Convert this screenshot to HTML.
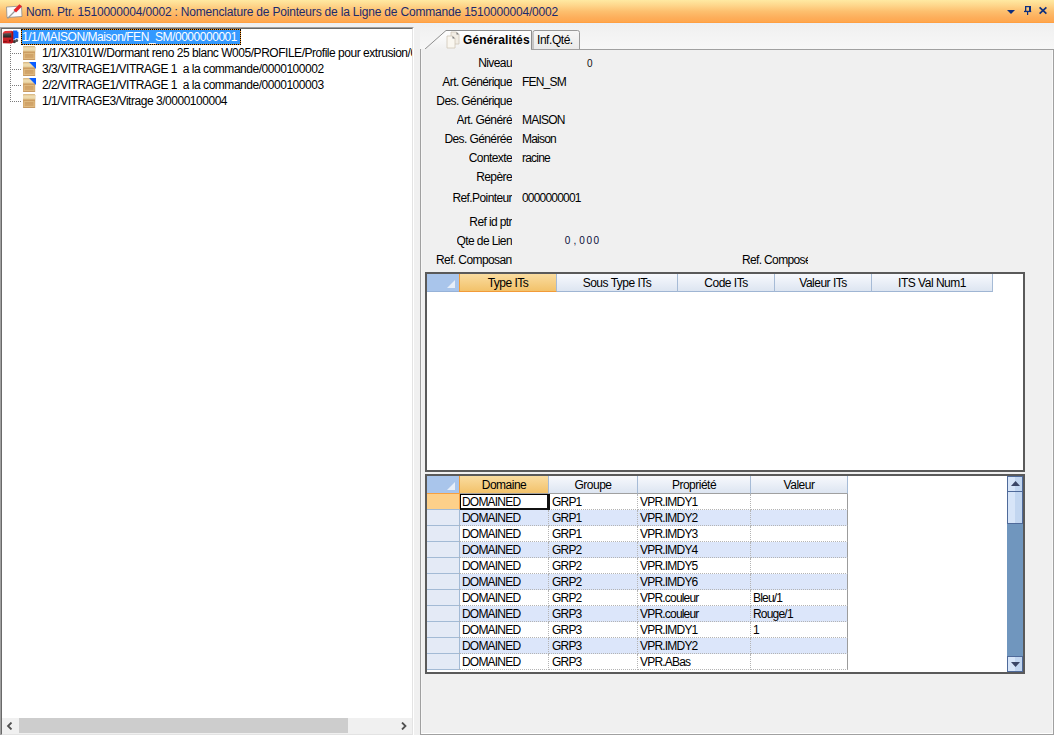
<!DOCTYPE html>
<html><head><meta charset="utf-8">
<style>
*{margin:0;padding:0;box-sizing:border-box}
html,body{width:1054px;height:735px;overflow:hidden;background:#F0F0F0;font-family:"Liberation Sans",sans-serif;font-size:11px;color:#000}
.a{position:absolute}
.t{position:absolute;white-space:nowrap;line-height:13px}
#title{left:0;top:0;width:1054px;height:23px;background:linear-gradient(#FFE9A2 0%,#FED58A 25%,#FDBF6E 50%,#FDAF5C 75%,#FFA74E 95%,#FF9C3A 100%)}
#ttxt{left:26px;top:5px;font-size:12px;color:#1C2A6C;line-height:15px;letter-spacing:-0.19px}
#tree{left:0;top:27px;width:414px;height:709px;border-left:1px solid #A0A0A0;border-top:1px solid #A0A0A0;border-right:1px solid #FFF;border-bottom:1px solid #FFF}
#treei{position:absolute;left:0;top:0;right:0;bottom:0;border-left:1px solid #696969;border-top:1px solid #696969;border-right:1px solid #E3E3E3;border-bottom:1px solid #E3E3E3;background:#fff;overflow:hidden}
.row{position:absolute;height:16px;white-space:nowrap;line-height:16px;font-size:12px;letter-spacing:-0.47px}
#page{left:420px;top:49px;width:634px;height:686px;border-left:1px solid #A0A0A0;border-top:1px solid #A0A0A0;border-right:1px solid #A0A0A0;border-bottom:1px solid #A0A0A0}
#pagei{position:absolute;left:0;top:0;right:0;bottom:0;border-right:1px solid #F8F8F8;border-bottom:1px solid #FFF;border-left:1px solid #F6F6F6}
.lbl{position:absolute;right:542px;white-space:nowrap;line-height:13px;font-size:12px;letter-spacing:-0.6px;text-align:right;overflow:hidden}
.mc{display:inline-block;width:7.2px;text-align:center}
.val{position:absolute;left:522px;white-space:nowrap;line-height:13px;font-size:12px;letter-spacing:-0.8px}
.grid{position:absolute;background:#fff;border:2px solid #5A5A5A}
.hdr{position:absolute;top:0;height:18px;line-height:19px;text-align:center;font-size:12px;letter-spacing:-0.5px;background:linear-gradient(#F7F9FD,#DDE5F1);border-right:1px solid #A6BBD6;border-bottom:1px solid #9FB5D3}
.hdr.sel{background:linear-gradient(#FADCA0,#F2C26A);border-left:1px solid #F29B38;border-bottom:1px solid #F29B38}
.ind{position:absolute;left:0;top:0;width:32px;height:18px;background:#A9C5EB;border-bottom:1px solid #96B2D8}
.gr{position:absolute;left:0;height:16px;width:420px}
.indr{position:absolute;left:0;top:0;width:33px;height:16px;background:#E4EAF6;border-bottom:1px solid #A3BAD5;border-right:1px solid #A3BAD5}
.indr.cur{background:#FDD08A;border-top:1px solid #F7A040;top:-1px;height:17px;border-right:1px solid #F7A040;width:33px}
.gr.alt{background:#DCE6FA}
.gr{background:#fff}
.cell{position:absolute;top:0;height:16px;line-height:16px;font-size:12px;letter-spacing:-0.8px;padding-left:3px;white-space:nowrap;overflow:hidden;border-right:1px dotted #B4B4B4;border-bottom:1px dotted #B4B4B4}
</style></head><body>

<div id="title" class="a">
  <svg class="a" style="left:5px;top:3px" width="18" height="17" viewBox="0 0 18 17">
    <polygon points="1.5,4 16.5,3 17,13.5 2,14.5" fill="#FCFCFC" stroke="#8C8C8C" stroke-width="0.8"/>
    <line x1="2.5" y1="15.5" x2="10" y2="8" stroke="#9A9A9A" stroke-width="1.2"/>
    <polygon points="8.5,7 14.5,1.2 17,3.5 11,9.5" fill="#E3262A"/>
  </svg>
  <div id="ttxt" class="t">Nom. Ptr. 1510000004/0002 : Nomenclature de Pointeurs de la Ligne de Commande 1510000004/0002</div>
  <svg class="a" style="left:1000px;top:0" width="54" height="23" viewBox="0 0 54 23">
    <polygon points="7,10 15,10 11,14" fill="#0E2F7E"/>
    <rect x="25" y="6" width="6" height="1.2" fill="#0E2F7E"/>
    <rect x="25" y="6" width="1.3" height="5" fill="#0E2F7E"/>
    <rect x="29" y="6" width="2" height="5" fill="#0E2F7E"/>
    <rect x="24" y="10.8" width="7.2" height="1.3" fill="#0E2F7E"/>
    <rect x="27" y="12" width="1.2" height="3" fill="#0E2F7E"/>
    <path d="M39.6,7.4 L46.4,13.6 M46.4,7.4 L39.6,13.6" stroke="#0E2F7E" stroke-width="1.7"/>
  </svg>
</div>
<div class="a" style="left:0;top:23px;width:1054px;height:1px;background:#EAF0F8"></div>

<div id="tree" class="a"><div id="treei">
  <!-- tree lines -->
  <div class="a" style="left:8px;top:16px;width:1px;height:57px;border-left:1px dotted #7A7A7A"></div>
  <div class="a" style="left:10px;top:24px;width:9px;height:1px;border-top:1px dotted #7A7A7A"></div>
  <div class="a" style="left:10px;top:40px;width:9px;height:1px;border-top:1px dotted #7A7A7A"></div>
  <div class="a" style="left:10px;top:56px;width:9px;height:1px;border-top:1px dotted #7A7A7A"></div>
  <div class="a" style="left:10px;top:72px;width:9px;height:1px;border-top:1px dotted #7A7A7A"></div>

  <!-- truck -->
  <svg class="a" style="left:0;top:0" width="18" height="16" viewBox="0 0 18 16">
    <defs><linearGradient id="cabg" x1="0" y1="0" x2="0" y2="1"><stop offset="0" stop-color="#E8383C"/><stop offset="1" stop-color="#B8141A"/></linearGradient>
    <linearGradient id="wsg" x1="0" y1="0" x2="0" y2="1"><stop offset="0" stop-color="#5A5A5A"/><stop offset="1" stop-color="#1E1E1E"/></linearGradient></defs>
    <path d="M11,1.6 L15.3,1.6 L15.3,2.8 L16.4,2.8 L16.4,9.3 L13,9.3 L13,10.6 L11,10.6 Z" fill="#0B63FF"/>
    <ellipse cx="12.3" cy="12.6" rx="1.7" ry="1.6" fill="#3A3A3A"/><ellipse cx="14.6" cy="11.4" rx="1.5" ry="1.5" fill="#555"/>
    <path d="M0.8,4.5 Q1.2,2.2 3.2,1.9 L9.6,1.7 L11.2,2.6 L11.2,13.2 L9.5,14.6 L0.9,14.2 Z" fill="url(#cabg)"/>
    <path d="M9.5,2.2 L11.2,2.8 L11.2,13 L9.6,14.2 Z" fill="#A81015"/>
    <path d="M1.2,4.4 L9.2,4 L9.4,8.4 L1.2,8.6 Z" fill="url(#wsg)"/>
    <rect x="7.3" y="10.8" width="1.2" height="1.8" fill="#300"/>
    <rect x="1.5" y="12.2" width="3.2" height="0.9" fill="#7A0E12"/>
  </svg>
  <!-- selection -->
  <div class="a" style="left:19px;top:0;width:220px;height:16px;border:1px dotted #000;background:linear-gradient(#3399FF,#3399FF) padding-box,linear-gradient(#F0901E,#F0901E) border-box"></div>
  <div class="row" style="left:20px;top:0;color:#fff">1/1/MAISON/Maison/FEN_SM/0000000001</div>

  <svg width="0" height="0" style="position:absolute"><defs><linearGradient id="lidg" x1="0" y1="0" x2="0" y2="1"><stop offset="0" stop-color="#E2C48E"/><stop offset="0.5" stop-color="#F0E0B6"/><stop offset="1" stop-color="#E2C690"/></linearGradient><linearGradient id="bodg" x1="0" y1="0" x2="0" y2="1"><stop offset="0" stop-color="#A8763C"/><stop offset="0.3" stop-color="#C99A5E"/><stop offset="1" stop-color="#D6AA70"/></linearGradient></defs></svg><svg class="a" style="left:19px;top:16px" width="16" height="16" viewBox="0 0 16 16"><rect x="2" y="1.2" width="12.2" height="13.6" rx="1.2" fill="url(#bodg)"/><path d="M2,2.4 Q2,1.2 3.2,1.2 L13,1.2 Q14.2,1.2 14.2,2.4 L14.2,6.6 L2,6.6 Z" fill="url(#lidg)"/><rect x="3.2" y="8.6" width="9.8" height="5" fill="none" stroke="#E2BE84" stroke-width="0.9"/><rect x="2" y="14" width="12.2" height="0.8" fill="#C09058"/></svg><svg class="a" style="left:19px;top:32px" width="16" height="16" viewBox="0 0 16 16"><rect x="2" y="1.2" width="12.2" height="13.6" rx="1.2" fill="url(#bodg)"/><path d="M2,2.4 Q2,1.2 3.2,1.2 L13,1.2 Q14.2,1.2 14.2,2.4 L14.2,6.6 L2,6.6 Z" fill="url(#lidg)"/><rect x="3.2" y="8.6" width="9.8" height="5" fill="none" stroke="#E2BE84" stroke-width="0.9"/><rect x="2" y="14" width="12.2" height="0.8" fill="#C09058"/><polygon points="8,1 15,1 15,8" fill="#0A5CFF"/></svg><svg class="a" style="left:19px;top:48px" width="16" height="16" viewBox="0 0 16 16"><rect x="2" y="1.2" width="12.2" height="13.6" rx="1.2" fill="url(#bodg)"/><path d="M2,2.4 Q2,1.2 3.2,1.2 L13,1.2 Q14.2,1.2 14.2,2.4 L14.2,6.6 L2,6.6 Z" fill="url(#lidg)"/><rect x="3.2" y="8.6" width="9.8" height="5" fill="none" stroke="#E2BE84" stroke-width="0.9"/><rect x="2" y="14" width="12.2" height="0.8" fill="#C09058"/><polygon points="8,1 15,1 15,8" fill="#0A5CFF"/></svg><svg class="a" style="left:19px;top:64px" width="16" height="16" viewBox="0 0 16 16"><rect x="2" y="1.2" width="12.2" height="13.6" rx="1.2" fill="url(#bodg)"/><path d="M2,2.4 Q2,1.2 3.2,1.2 L13,1.2 Q14.2,1.2 14.2,2.4 L14.2,6.6 L2,6.6 Z" fill="url(#lidg)"/><rect x="3.2" y="8.6" width="9.8" height="5" fill="none" stroke="#E2BE84" stroke-width="0.9"/><rect x="2" y="14" width="12.2" height="0.8" fill="#C09058"/></svg>
  <div class="row" style="left:40px;top:16px">1/1/X3101W/Dormant reno 25 blanc W005/PROFILE/Profile pour extrusion/0000100001</div>
  <div class="row" style="left:40px;top:32px">3/3/VITRAGE1/VITRAGE 1&nbsp; a la commande/0000100002</div>
  <div class="row" style="left:40px;top:48px">2/2/VITRAGE1/VITRAGE 1&nbsp; a la commande/0000100003</div>
  <div class="row" style="left:40px;top:64px">1/1/VITRAGE3/Vitrage 3/0000100004</div>

  <!-- h scrollbar -->
  <div class="a" style="left:0;top:689px;width:410px;height:16px;background:#F0F0F0">
    <div class="a" style="left:17px;top:0;width:329px;height:15px;background:#CDCDCD"></div>
    <svg class="a" style="left:4px;top:4px" width="8" height="8" viewBox="0 0 8 8"><path d="M5.5,0.5 L2,4 L5.5,7.5" fill="none" stroke="#505050" stroke-width="1.8"/></svg>
    <svg class="a" style="left:398px;top:4px" width="8" height="8" viewBox="0 0 8 8"><path d="M2,0.5 L5.5,4 L2,7.5" fill="none" stroke="#505050" stroke-width="1.8"/></svg>
  </div>
</div></div>

<!-- tab strip -->
<div class="a" style="left:420px;top:24px;width:634px;height:25px;background:linear-gradient(#F0F0F0,#F7F7F7)"></div>
<svg class="a" style="left:420px;top:29px" width="170" height="22" viewBox="0 0 170 22">
  <path d="M0.5,20.5 L4.5,20.5 L26,1.5 L111.5,1.5 L111.5,20.5" fill="url(#tg)" stroke="#8E8E8E" stroke-width="1"/>
  <path d="M113,20.5 L113,3.5 Q113,1.5 115,1.5 L157.5,1.5 Q159.5,1.5 159.5,3.5 L159.5,20.5 Z" fill="url(#tg2)" stroke="#9A9A9A" stroke-width="1"/>
  <defs>
    <linearGradient id="tg" x1="0" y1="0" x2="0" y2="1"><stop offset="0" stop-color="#FFFFFF"/><stop offset="1" stop-color="#F0F0F0"/></linearGradient>
    <linearGradient id="tg2" x1="0" y1="0" x2="0" y2="1"><stop offset="0" stop-color="#F6F6F6"/><stop offset="1" stop-color="#EAEAEA"/></linearGradient>
  </defs>
</svg>
<svg class="a" style="left:446px;top:31px" width="14" height="18" viewBox="0 0 14 18">
  <path d="M5,1 L10.5,1 L13,3.5 L13,13 L5,13 Z" fill="#F2EDE4" stroke="#CFC6B8" stroke-width="0.8"/>
  <path d="M1,5 L6.5,5 L9,7.5 L9,17 L1,17 Z" fill="#FAF7F0" stroke="#CFC6B8" stroke-width="0.8"/>
  <path d="M6.5,5 L6.5,7.5 L9,7.5" fill="#777" />
  <path d="M10.5,1 L10.5,3.5 L13,3.5" fill="#777" />
</svg>
<div class="t" style="left:463px;top:34px;font-weight:bold;font-size:12px;letter-spacing:0.12px">Généralités</div>
<div class="t" style="left:537px;top:34px;font-size:12px;letter-spacing:-0.45px">Inf.Qté.</div>

<!-- tab page -->
<div id="page" class="a"><div id="pagei"></div></div>
<div class="a" style="left:421px;top:49px;width:110px;height:1px;background:#F0F0F0"></div>

<!-- labels -->
<div class="lbl" style="top:57px">Niveau</div>
<div class="lbl" style="top:76px">Art. Générique</div>
<div class="lbl" style="top:95px">Des. Générique</div>
<div class="lbl" style="top:114px">Art. Généré</div>
<div class="lbl" style="top:133px">Des. Générée</div>
<div class="lbl" style="top:152px">Contexte</div>
<div class="lbl" style="top:171px">Repère</div>
<div class="lbl" style="top:192px">Ref.Pointeur</div>
<div class="lbl" style="top:216px">Ref id ptr</div>
<div class="lbl" style="top:235px">Qte de Lien</div>
<div class="lbl" style="top:254px;width:76px;text-align:left">Ref. Composant</div>
<div class="t" style="left:742px;top:254px;width:66px;overflow:hidden;font-size:12px;letter-spacing:-0.65px">Ref. Composé</div>

<div class="t" style="left:587px;top:57px;font-size:10px;color:#111">0</div>
<div class="val" style="top:76px">FEN_SM</div>
<div class="val" style="top:114px">MAISON</div>
<div class="val" style="top:133px">Maison</div>
<div class="val" style="top:152px">racine</div>
<div class="val" style="top:192px;letter-spacing:-0.8px">0000000001</div>
<div class="t" style="left:564px;top:234px;font-size:10px;color:#0A0E3A"><span class="mc">0</span><span class="mc">,</span><span class="mc">0</span><span class="mc">0</span><span class="mc">0</span></div>

<!-- grid 1 -->
<div class="grid" style="left:425px;top:272px;width:600px;height:200px">
  <div class="ind"><svg class="a" style="left:20px;top:6px" width="9" height="9"><polygon points="8,0 8,8 0,8" fill="#E7EEF8"/></svg></div>
  <div class="hdr sel" style="left:32px;width:98px">Type ITs</div>
  <div class="hdr" style="left:130px;width:121px">Sous Type ITs</div>
  <div class="hdr" style="left:251px;width:97px">Code ITs</div>
  <div class="hdr" style="left:348px;width:97px">Valeur ITs</div>
  <div class="hdr" style="left:445px;width:121px">ITS Val Num1</div>
</div>

<!-- grid 2 -->
<div class="grid" style="left:425px;top:474px;width:600px;height:200px" id="g2">
  <div class="ind"><svg class="a" style="left:20px;top:6px" width="9" height="9"><polygon points="8,0 8,8 0,8" fill="#E7EEF8"/></svg></div>
  <div class="hdr sel" style="left:32px;width:90px;border-bottom-color:#A0A0A0">Domaine</div>
  <div class="hdr" style="left:122px;width:89px;border-bottom-color:#A0A0A0">Groupe</div>
  <div class="hdr" style="left:211px;width:113px;border-bottom-color:#A0A0A0">Propriété</div>
  <div class="hdr" style="left:324px;width:97px;border-bottom-color:#A0A0A0">Valeur</div>
  <div class="gr" style="top:18px"><div class="indr cur"></div><div class="cell" style="left:32px;width:90px">DOMAINED</div><div class="cell" style="left:122px;width:89px">GRP1</div><div class="cell" style="left:211px;width:113px;padding-left:2px">VPR.IMDY1</div><div class="cell" style="left:324px;width:97px;padding-left:2px;border-right:1px solid #9C9C9C"></div></div>
<div class="gr alt" style="top:34px"><div class="indr"></div><div class="cell" style="left:32px;width:90px">DOMAINED</div><div class="cell" style="left:122px;width:89px">GRP1</div><div class="cell" style="left:211px;width:113px;padding-left:2px">VPR.IMDY2</div><div class="cell" style="left:324px;width:97px;padding-left:2px;border-right:1px solid #9C9C9C"></div></div>
<div class="gr" style="top:50px"><div class="indr"></div><div class="cell" style="left:32px;width:90px">DOMAINED</div><div class="cell" style="left:122px;width:89px">GRP1</div><div class="cell" style="left:211px;width:113px;padding-left:2px">VPR.IMDY3</div><div class="cell" style="left:324px;width:97px;padding-left:2px;border-right:1px solid #9C9C9C"></div></div>
<div class="gr alt" style="top:66px"><div class="indr"></div><div class="cell" style="left:32px;width:90px">DOMAINED</div><div class="cell" style="left:122px;width:89px">GRP2</div><div class="cell" style="left:211px;width:113px;padding-left:2px">VPR.IMDY4</div><div class="cell" style="left:324px;width:97px;padding-left:2px;border-right:1px solid #9C9C9C"></div></div>
<div class="gr" style="top:82px"><div class="indr"></div><div class="cell" style="left:32px;width:90px">DOMAINED</div><div class="cell" style="left:122px;width:89px">GRP2</div><div class="cell" style="left:211px;width:113px;padding-left:2px">VPR.IMDY5</div><div class="cell" style="left:324px;width:97px;padding-left:2px;border-right:1px solid #9C9C9C"></div></div>
<div class="gr alt" style="top:98px"><div class="indr"></div><div class="cell" style="left:32px;width:90px">DOMAINED</div><div class="cell" style="left:122px;width:89px">GRP2</div><div class="cell" style="left:211px;width:113px;padding-left:2px">VPR.IMDY6</div><div class="cell" style="left:324px;width:97px;padding-left:2px;border-right:1px solid #9C9C9C"></div></div>
<div class="gr" style="top:114px"><div class="indr"></div><div class="cell" style="left:32px;width:90px">DOMAINED</div><div class="cell" style="left:122px;width:89px">GRP2</div><div class="cell" style="left:211px;width:113px;padding-left:2px">VPR.couleur</div><div class="cell" style="left:324px;width:97px;padding-left:2px;border-right:1px solid #9C9C9C">Bleu/1</div></div>
<div class="gr alt" style="top:130px"><div class="indr"></div><div class="cell" style="left:32px;width:90px">DOMAINED</div><div class="cell" style="left:122px;width:89px">GRP3</div><div class="cell" style="left:211px;width:113px;padding-left:2px">VPR.couleur</div><div class="cell" style="left:324px;width:97px;padding-left:2px;border-right:1px solid #9C9C9C">Rouge/1</div></div>
<div class="gr" style="top:146px"><div class="indr"></div><div class="cell" style="left:32px;width:90px">DOMAINED</div><div class="cell" style="left:122px;width:89px">GRP3</div><div class="cell" style="left:211px;width:113px;padding-left:2px">VPR.IMDY1</div><div class="cell" style="left:324px;width:97px;padding-left:2px;border-right:1px solid #9C9C9C">1</div></div>
<div class="gr alt" style="top:162px"><div class="indr"></div><div class="cell" style="left:32px;width:90px">DOMAINED</div><div class="cell" style="left:122px;width:89px">GRP3</div><div class="cell" style="left:211px;width:113px;padding-left:2px">VPR.IMDY2</div><div class="cell" style="left:324px;width:97px;padding-left:2px;border-right:1px solid #9C9C9C"></div></div>
<div class="gr" style="top:178px"><div class="indr"></div><div class="cell" style="left:32px;width:90px">DOMAINED</div><div class="cell" style="left:122px;width:89px">GRP3</div><div class="cell" style="left:211px;width:113px;padding-left:2px">VPR.ABas</div><div class="cell" style="left:324px;width:97px;padding-left:2px;border-right:1px solid #9C9C9C"></div></div>
  <div class="a" style="left:33px;top:18px;width:90px;height:16px;border-left:1px solid #000;border-top:1px solid #000;border-right:3px solid #111;border-bottom:2px solid #111"></div>
  <!-- scrollbar -->
  <div class="a" style="left:580px;top:0;width:16px;height:196px;background:#7096BE">
    <div class="a" style="left:0;top:0;width:16px;height:16px;border:1px solid #4F6A9A;background:linear-gradient(90deg,#D7E5F8 50%,#C2D6F0 50%)"><svg class="a" style="left:3px;top:4px" width="9" height="6"><polygon points="4.5,0 9,5 0,5" fill="#3B4666"/></svg></div>
    <div class="a" style="left:0;top:15px;width:16px;height:33px;border:1px solid #4F6A9A;background:linear-gradient(90deg,#D7E5F8 50%,#C2D6F0 50%)"></div>
    <div class="a" style="left:0;top:180px;width:16px;height:16px;border:1px solid #4F6A9A;background:linear-gradient(90deg,#D7E5F8 50%,#C2D6F0 50%)"><svg class="a" style="left:3px;top:5px" width="9" height="6"><polygon points="0,0 9,0 4.5,5" fill="#3B4666"/></svg></div>
  </div>
</div>
</body></html>
